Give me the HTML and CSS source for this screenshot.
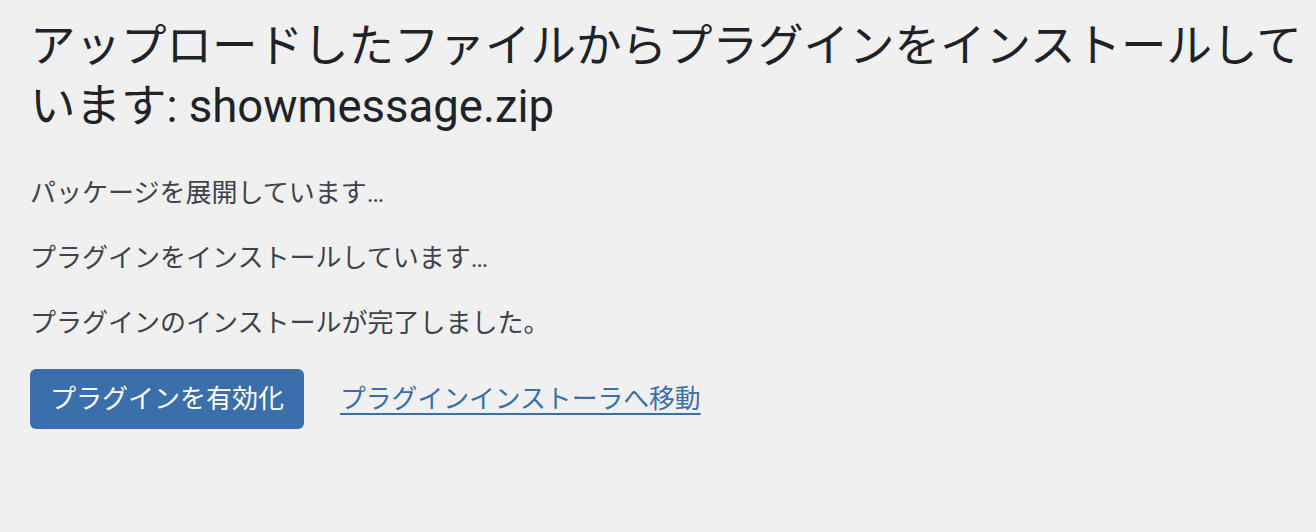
FILE: index.html
```html
<!DOCTYPE html>
<html lang="ja">
<head>
  <meta charset="utf-8">
  <title>プラグインのインストール</title>
  <link rel="stylesheet" href="styles.css">
</head>
<body>
  <div class="wrap">
    <h1>アップロードしたファイルからプラグインをインストールしています: showmessage.zip</h1>
    <p>パッケージを展開しています…</p>
    <p>プラグインをインストールしています…</p>
    <p>プラグインのインストールが完了しました。</p>
    <p class="actions">
      <a class="button" href="#">プラグインを有効化</a>
      <a class="link" href="#">プラグインインストーラへ移動</a>
    </p>
  </div>
</body>
</html>
```

FILE: styles.css
```css
body {
  margin: 0;
  background-color: #f0f0f1;
  font-family: Roboto, "Noto Sans CJK JP", sans-serif;
  color: #3c434a;
}

.wrap {
  padding: 17px 10px 0 30px;
}

h1 {
  margin: 0;
  padding: 0 0 11px;
  font-size: 45.5px;
  font-weight: 400;
  line-height: 60px;
  color: #1d2327;
}

p {
  margin: 26px 0;
  font-size: 26px;
  line-height: 39px;
}

.actions {
  display: flex;
  align-items: center;
  gap: 36px;
}

.button {
  display: inline-block;
  height: 60px;
  padding: 0 20px;
  line-height: 60px;
  background-color: #3a6fab;
  color: #fff;
  border-radius: 6px;
  text-decoration: none;
}

.link {
  color: #3a6fab;
  font-size: 25.8px;
  text-decoration: underline;
  text-underline-offset: 5px;
}
```
